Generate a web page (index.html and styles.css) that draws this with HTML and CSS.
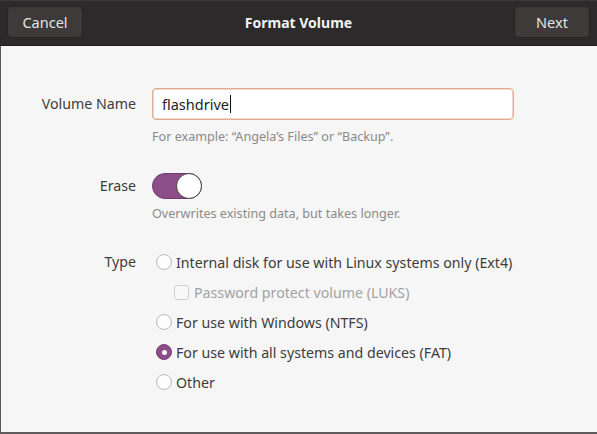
FILE: index.html
```html
<!DOCTYPE html>
<html lang="en">
<head>
<meta charset="utf-8">
<title>Format Volume</title>
<link rel="stylesheet" href="styles.css">
</head>
<body>
<div class="dialog">
  <header class="headerbar">
    <button class="hb-btn">Cancel</button>
    <div class="title">Format Volume</div>
    <button class="hb-btn">Next</button>
  </header>
  <main class="content">
    <div class="row">
      <div class="label label-entry">Volume Name</div>
      <div class="field">
        <div class="entry"><span class="entry-text">flashdrive</span><span class="caret"></span></div>
        <div class="hint hint-entry">For example: “Angela’s Files” or “Backup”.</div>
      </div>
    </div>
    <div class="row row-erase">
      <div class="label label-switch">Erase</div>
      <div class="field">
        <div class="switch"><span class="knob"></span></div>
        <div class="hint hint-switch">Overwrites existing data, but takes longer.</div>
      </div>
    </div>
    <div class="row row-type">
      <div class="label label-option">Type</div>
      <div class="field options">
        <div class="option"><span class="radio"></span><span>Internal disk for use with Linux systems only (Ext4)</span></div>
        <div class="option sub disabled"><span class="check"></span><span>Password protect volume (LUKS)</span></div>
        <div class="option"><span class="radio"></span><span>For use with Windows (NTFS)</span></div>
        <div class="option"><span class="radio checked"></span><span>For use with all systems and devices (FAT)</span></div>
        <div class="option"><span class="radio"></span><span>Other</span></div>
      </div>
    </div>
  </main>
</div>
</body>
</html>
```
FILE: styles.css
```css
html, body {
  margin: 0;
  padding: 0;
  background: #f6f6f6;
}
body {
  font-family: "Noto Sans", "Open Sans", sans-serif;
  font-size: 14.2px;
  color: #3c3c3c;
}
.dialog {
  width: 597px;
  height: 434px;
  box-sizing: border-box;
  display: flex;
  flex-direction: column;
  border-left: 1px solid #5a5858;
  border-bottom: 2px solid #5e5c5c;
  background: #f6f6f6;
}
.headerbar {
  height: 46px;
  box-sizing: border-box;
  background: #2c2a2a;
  border-top: 1px solid #3a3838;
  border-bottom: 1px solid #1c1b1b;
  display: flex;
  align-items: center;
  justify-content: space-between;
  padding: 0 7px 2px 7px;
  margin-left: -1px;
}
.hb-btn {
  width: 76px;
  height: 32px;
  background: #3d3a39;
  border: 1px solid #262424;
  border-radius: 5px;
  color: #e4e4e4;
  font-family: inherit;
  font-size: 14.5px;
  padding: 0;
}
.title {
  color: #f2f2f2;
  font-weight: bold;
  font-size: 14px;
}
.content {
  padding-top: 42px;
  display: flex;
  flex-direction: column;
}
.row {
  display: flex;
  gap: 16px;
}
.label {
  width: 135px;
  text-align: right;
  flex: none;
}
.label-entry { line-height: 32px; }
.label-switch { line-height: 26px; }
.label-option { line-height: 30px; }
.field {
  display: flex;
  flex-direction: column;
  align-items: flex-start;
}
.entry {
  width: 362px;
  height: 32px;
  box-sizing: border-box;
  background: #ffffff;
  border: 1px solid #ddae95;
  box-shadow: inset 0 0 0 1px #f1d6c8;
  border-radius: 4px;
  display: flex;
  align-items: center;
  padding-left: 9px;
  color: #1e1e1e;
  font-size: 14.5px;
}
.caret {
  width: 1px;
  height: 18px;
  background: #111;
  margin-left: 1px;
}
.hint {
  font-size: 12.6px;
  color: #8a8a8a;
  line-height: 18px;
}
.hint-entry { margin-top: 8px; }
.row-erase { margin-top: 27px; }
.switch {
  width: 50px;
  height: 26px;
  box-sizing: border-box;
  border-radius: 13px;
  background: #8c4d88;
  border: 1px solid #6f3a6c;
  position: relative;
}
.knob {
  position: absolute;
  right: -1px;
  top: -1px;
  width: 26px;
  height: 26px;
  box-sizing: border-box;
  border-radius: 50%;
  background: #ffffff;
  border: 1px solid #4a4444;
}
.hint-switch { margin-top: 6px; }
.row-type { margin-top: 24px; }
.option {
  height: 30px;
  display: flex;
  align-items: center;
  gap: 4px;
  color: #3c3c3c;
  white-space: nowrap;
}
.option.sub { padding-left: 22px; gap: 5px; }
.option.disabled { color: #a2a2a2; }
.radio {
  width: 16px;
  height: 16px;
  box-sizing: border-box;
  border-radius: 50%;
  border: 1px solid #b9b9b9;
  background: #fdfdfd;
  margin-left: 4px;
  flex: none;
  position: relative;
}
.radio.checked {
  background: #8c4d88;
  border-color: #7a4077;
}
.radio.checked::after {
  content: "";
  position: absolute;
  left: 4.5px;
  top: 4.5px;
  width: 5px;
  height: 5px;
  border-radius: 50%;
  background: #ffffff;
}
.check {
  width: 15px;
  height: 15px;
  box-sizing: border-box;
  border: 1px solid #cfcfcf;
  border-radius: 3px;
  background: #f8f8f8;
  flex: none;
}
```
